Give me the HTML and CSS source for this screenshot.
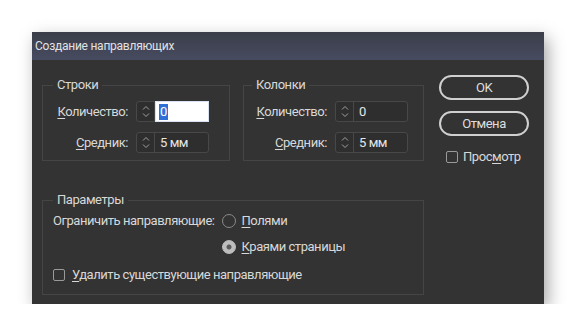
FILE: index.html
```html
<!DOCTYPE HTML>
<html>
<head>
<title>Создание направляющих</title>
<meta charset="utf-8" />
<link rel="stylesheet" href="styles.css">
</head>
<body>
<div class="dialog">
  <div class="titlebar">Создание направляющих</div>
  <div class="content">
    <div class="main">
      <div class="groups">
        <!-- строки -->
        <fieldset class="group group-rows">
          <legend>Строки</legend>
          <div class="fields">
            <label><u>К</u>оличество:</label>
            <div class="spin">
              <span class="arrows"><svg width="10" height="17" viewBox="0 0 10 17"><path d="M2 6.5 L5 3.5 L8 6.5 M2 10.5 L5 13.5 L8 10.5" fill="none" stroke="#a0a0a0" stroke-width="1"/></svg></span>
              <span class="value active"><span class="sel">0</span></span>
            </div>
            <label><u>С</u>редник:</label>
            <div class="spin">
              <span class="arrows"><svg width="10" height="17" viewBox="0 0 10 17"><path d="M2 6.5 L5 3.5 L8 6.5 M2 10.5 L5 13.5 L8 10.5" fill="none" stroke="#a0a0a0" stroke-width="1"/></svg></span>
              <span class="value">5 мм</span>
            </div>
          </div>
        </fieldset>
        <!-- колонки -->
        <fieldset class="group group-cols">
          <legend>Колонки</legend>
          <div class="fields">
            <label><u>К</u>оличество:</label>
            <div class="spin">
              <span class="arrows"><svg width="10" height="17" viewBox="0 0 10 17"><path d="M2 6.5 L5 3.5 L8 6.5 M2 10.5 L5 13.5 L8 10.5" fill="none" stroke="#a0a0a0" stroke-width="1"/></svg></span>
              <span class="value">0</span>
            </div>
            <label><u>С</u>редник:</label>
            <div class="spin">
              <span class="arrows"><svg width="10" height="17" viewBox="0 0 10 17"><path d="M2 6.5 L5 3.5 L8 6.5 M2 10.5 L5 13.5 L8 10.5" fill="none" stroke="#a0a0a0" stroke-width="1"/></svg></span>
              <span class="value">5 мм</span>
            </div>
          </div>
        </fieldset>
      </div>
      <!-- параметры -->
      <fieldset class="group group-params">
        <legend>Параметры</legend>
        <div class="limit">
          <span>Ограничить направляющие:</span>
          <div class="option"><span class="radio"></span><span><u>П</u>олями</span></div>
          <span></span>
          <div class="option"><span class="radio checked"></span><span><u>К</u>раями страницы</span></div>
        </div>
        <div class="option check-row"><span class="checkbox"></span><span><u>У</u>далить существующие направляющие</span></div>
      </fieldset>
    </div>
    <div class="side">
      <div class="btn">OK</div>
      <div class="btn">Отмена</div>
      <div class="option preview"><span class="checkbox"></span><span>Прос<u>м</u>отр</span></div>
    </div>
  </div>
</div>
</body>
</html>
```

FILE: styles.css
```css
*{
  margin:0;
  padding:0;
  box-sizing:border-box;
}
body{
  background:#fff;
  font-family:Roboto,"Noto Sans",sans-serif;
  font-size:13px;
  line-height:16px;
  letter-spacing:-0.45px;
  color:#d8d8d8;
}
u{
  text-decoration:underline;
  text-underline-offset:2px;
}
.dialog{
  margin:32px 0 0 32px;
  width:512px;
  height:272px;
  background:#333333;
  box-shadow:4px 6px 16px rgba(0,0,0,0.35);
  display:flex;
  flex-direction:column;
}
.titlebar{
  height:28px;
  line-height:28px;
  padding-left:3px;
  font-size:12px;
  letter-spacing:-0.25px;
  background:linear-gradient(#3b3e49,#464b60);
  color:#e2e2e2;
}
.content{
  display:flex;
  padding:0 15px 0 10px;
  gap:15px;
}
.main{
  width:382px;
  margin-top:17px;
  display:flex;
  flex-direction:column;
  gap:31px;
}
.groups{
  display:flex;
  gap:13px;
}
.group{
  border:1px solid #454545;
  min-width:0;
}
.group legend{
  padding:0 4px;
  line-height:16px;
  color:#d8d8d8;
}
.group-rows{
  width:188px;
  padding:8px 20px 7px 10px;
}
.group-cols{
  width:181px;
  padding:8px 15px 7px 8px;
}
.fields{
  display:grid;
  grid-template-columns:1fr 73px;
  column-gap:8px;
  row-gap:10px;
  align-items:center;
}
.fields label{
  justify-self:end;
}
.spin{
  display:flex;
  height:21px;
  border:1px solid #484848;
  border-radius:3px;
  background:#2e2e2e;
}
.arrows{
  width:18px;
  border-right:1px solid #484848;
  display:flex;
  align-items:center;
  justify-content:center;
}
.value{
  flex:1;
  padding-left:5px;
  line-height:19px;
  color:#e6e6e6;
}
.value.active{
  background:#fff;
  border:1px solid #d8e2f2;
  margin:-1px -1px -1px 0;
  padding-left:3px;
  line-height:17px;
  padding-top:1px;
}
.sel{
  display:inline-block;
  background:#2f6fd6;
  color:#fff;
  padding:0 1px;
  line-height:16px;
}
.group-params{
  padding:5px 10px 11px 10px;
}
.limit{
  display:grid;
  grid-template-columns:auto auto;
  justify-content:start;
  column-gap:7px;
  row-gap:10px;
  align-items:center;
}
.option{
  display:flex;
  align-items:center;
  gap:6px;
}
.check-row{
  margin-top:12px;
  gap:7px;
}
.radio{
  width:14px;
  height:14px;
  border:1px solid #8a8a8a;
  border-radius:50%;
}
.radio.checked{
  border-color:#bdbdbd;
  background:radial-gradient(circle,#5a5a5a 0,#5a5a5a 2px,#bdbdbd 3px);
}
.checkbox{
  width:12px;
  height:12px;
  border:1px solid #9a9a9a;
  border-radius:2px;
}
.side{
  margin-top:15px;
  display:flex;
  flex-direction:column;
  gap:11px;
  width:90px;
}
.btn{
  height:25px;
  border:2px solid #d0d0d0;
  border-radius:13px;
  text-align:center;
  line-height:21px;
  color:#dedede;
}
.preview{
  margin-top:2px;
  padding-left:7px;
  gap:5px;
}
```
